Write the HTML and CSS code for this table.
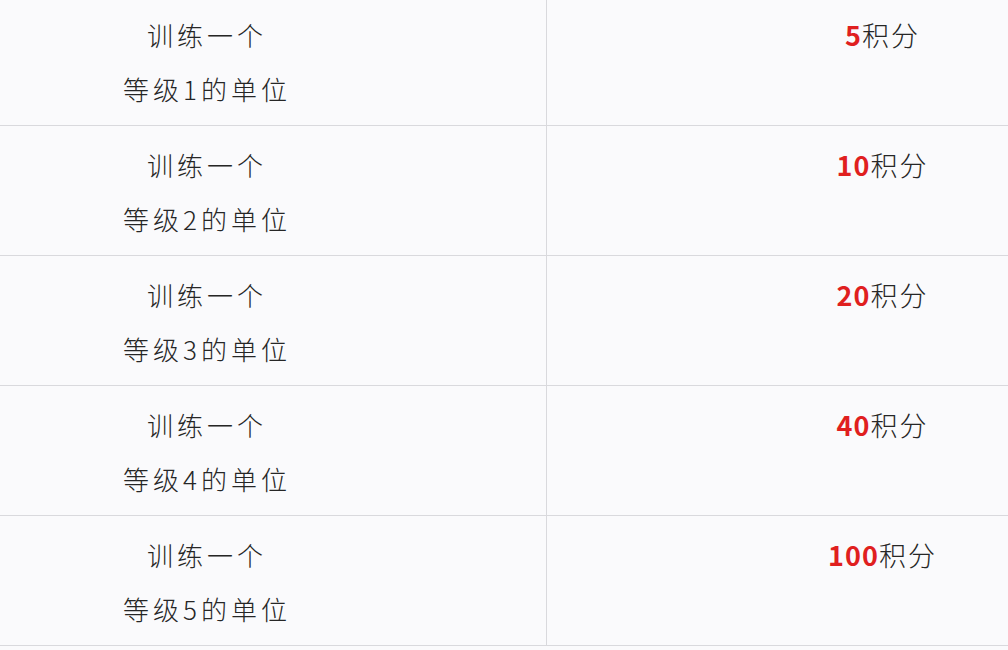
FILE: index.html
```html
<!DOCTYPE html>
<html lang="zh-CN">
<head>
<meta charset="utf-8">
<link rel="stylesheet" href="styles.css">
</head>
<body>
<div class="table">
  <div class="row">
    <div class="cell left"><div>训练一个</div><div>等级1的单位</div></div>
    <div class="cell right"><span class="num">5</span>积分</div>
  </div>
  <div class="row">
    <div class="cell left"><div>训练一个</div><div>等级2的单位</div></div>
    <div class="cell right"><span class="num">10</span>积分</div>
  </div>
  <div class="row">
    <div class="cell left"><div>训练一个</div><div>等级3的单位</div></div>
    <div class="cell right"><span class="num">20</span>积分</div>
  </div>
  <div class="row">
    <div class="cell left"><div>训练一个</div><div>等级4的单位</div></div>
    <div class="cell right"><span class="num">40</span>积分</div>
  </div>
  <div class="row">
    <div class="cell left"><div>训练一个</div><div>等级5的单位</div></div>
    <div class="cell right"><span class="num">100</span>积分</div>
  </div>
</div>
</body>
</html>
```
FILE: styles.css
```css
html, body {
  margin: 0;
  padding: 0;
  background: #fafafc;
}
body {
  width: 1008px;
  height: 650px;
  overflow: hidden;
  font-family: "Noto Sans CJK SC", "Noto Sans", sans-serif;
  color: #262626;
}
.table {
  margin-top: -4px;
}
.row {
  display: grid;
  grid-template-columns: 547px 1fr;
  height: 130px;
  box-sizing: border-box;
  border-bottom: 1px solid #d9d9dd;
}
.cell {
  font-size: 26px;
  line-height: 54px;
  letter-spacing: 4px;
  font-weight: 300;
}
.left {
  border-right: 1px solid #d9d9dd;
  box-sizing: border-box;
  padding: 12px 132px 9px 0;
  text-align: center;
}
.right {
  padding: 12px 0 0 210px;
  text-align: center;
  font-size: 27px;
  letter-spacing: 2px;
}
.num {
  color: #e01f1f;
  font-weight: 700;
  letter-spacing: 1px;
}
```
